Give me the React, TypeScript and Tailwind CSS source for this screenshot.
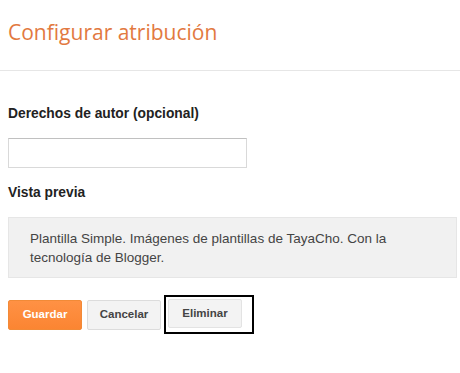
import React from "react";

export default function App() {
  return (
    <div className="w-[460px] h-[373px] bg-white overflow-hidden" style={{ fontFamily: '"Liberation Sans", Arial, sans-serif' }}>
      <div className="h-[71px] border-b border-[#e6e6e6] pl-2 pt-[18px]">
        <h1 className="text-[21px] leading-[28px] text-[#e2793f]" style={{ fontFamily: '"Open Sans", sans-serif' }}>
          Configurar atribución
        </h1>
      </div>
      <div className="px-2">
        <div className="mt-[35px] text-[13.8px] leading-[16px] font-bold text-[#222]">Derechos de autor (opcional)</div>
        <input
          type="text"
          className="mt-[16px] block w-[239px] h-[30px] border border-[#d9d9d9] border-t-[#c0c0c0] bg-white outline-none"
        />
        <div className="mt-[17px] text-[13.8px] leading-[16px] font-bold text-[#222]">Vista previa</div>
        <div className="mt-[16px] w-[449px] h-[61px] bg-[#f1f1f1] border border-[#e6e6e6] pl-[21px] pr-[20px] pt-[11px] text-[13.5px] leading-[19px] text-[#444]">
          Plantilla Simple. Imágenes de plantillas de TayaCho. Con la tecnología de Blogger.
        </div>
        <div className="mt-[17px] flex items-center">
          <button className="w-[74px] h-[30px] rounded-[2px] border border-[#f28a37] bg-gradient-to-b from-[#ff9144] to-[#fb8532] text-white text-[11.5px] font-bold">
            Guardar
          </button>
          <button className="ml-[5px] w-[74px] h-[30px] rounded-[2px] border border-[#dcdcdc] bg-[#f3f3f3] text-[#444] text-[11.5px] font-bold">
            Cancelar
          </button>
          <div className="ml-[3px] w-[90px] h-[39px] border-2 border-black pl-[2px] pt-[2px]">
            <button className="w-[74px] h-[29px] rounded-[2px] border border-[#e3e3e3] bg-[#f3f3f3] text-[#444] text-[11.5px] font-bold">
              Eliminar
            </button>
          </div>
        </div>
      </div>
    </div>
  );
}
